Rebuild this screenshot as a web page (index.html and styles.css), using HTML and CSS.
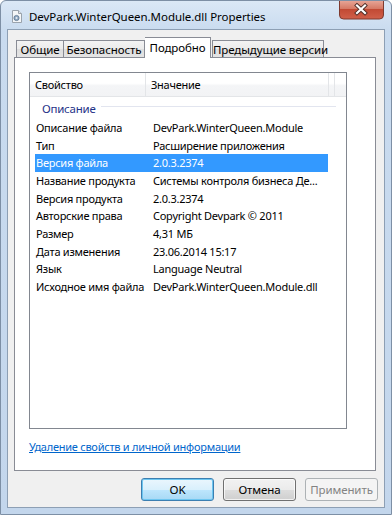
FILE: index.html
```html
<!DOCTYPE html>
<html lang="ru">
<head>
  <meta charset="UTF-8" />
  <title>DevPark.WinterQueen.Module.dll Properties</title>
  <link rel="stylesheet" href="styles.css">
</head>
<body>
  <div class="window">
    <div class="titlebar">
      <svg class="app-icon" width="10" height="13" viewBox="0 0 10 13">
        <path d="M0.5 0.5h6l3 3v9h-9z" fill="#f4f6f8" stroke="#9aa3ad"/>
        <path d="M6.5 0.5v3h3" fill="#dfe3e8" stroke="#9aa3ad"/>
        <circle cx="4.5" cy="8" r="2.6" fill="#8fa7c0" stroke="#5d7690" stroke-width="0.8"/>
        <circle cx="4.5" cy="8" r="1" fill="#e9eef3"/>
      </svg>
      <span class="title">DevPark.WinterQueen.Module.dll Properties</span>
      <button class="close-btn" title="Закрыть">
        <svg width="45" height="20" viewBox="0 0 45 20">
          <defs>
            <linearGradient id="closeGrad" x1="0" y1="0" x2="0" y2="1">
              <stop offset="0" stop-color="#e9a99b"/>
              <stop offset="0.45" stop-color="#d67a66"/>
              <stop offset="0.5" stop-color="#c24a34"/>
              <stop offset="1" stop-color="#d0604a"/>
            </linearGradient>
          </defs>
          <path d="M0.5 0v15a4 4 0 0 0 4 4h36a4 4 0 0 0 4-4v-15" fill="url(#closeGrad)" stroke="#7e3a2f"/>
          <path d="M18 5.5l8 7.5M26 5.5l-8 7.5" stroke="#4a2a25" stroke-width="4" stroke-linecap="square"/>
          <path d="M18 5.5l8 7.5M26 5.5l-8 7.5" stroke="#ffffff" stroke-width="2.2" stroke-linecap="square"/>
        </svg>
      </button>
    </div>

    <div class="client">
      <div class="tabs">
        <div class="tab tab-general">Общие</div>
        <div class="tab tab-security">Безопасность</div>
        <div class="tab tab-details active">Подробно</div>
        <div class="tab tab-previous">Предыдущие версии</div>
      </div>

      <div class="panel">
        <div class="listview">
          <div class="lv-header">
            <div class="col col-name">Свойство</div>
            <div class="col col-value">Значение</div>
            <div class="col col-rest"></div>
          </div>
          <div class="group"><span>Описание</span></div>
          <div class="row"><span class="cell-name">Описание файла</span><span class="cell-value">DevPark.WinterQueen.Module</span></div>
          <div class="row"><span class="cell-name">Тип</span><span class="cell-value">Расширение приложения</span></div>
          <div class="row selected"><span class="cell-name">Версия файла</span><span class="cell-value">2.0.3.2374</span></div>
          <div class="row"><span class="cell-name">Название продукта</span><span class="cell-value">Системы контроля бизнеса Де...</span></div>
          <div class="row"><span class="cell-name">Версия продукта</span><span class="cell-value">2.0.3.2374</span></div>
          <div class="row"><span class="cell-name">Авторские права</span><span class="cell-value">Copyright Devpark © 2011</span></div>
          <div class="row"><span class="cell-name">Размер</span><span class="cell-value">4,31 МБ</span></div>
          <div class="row"><span class="cell-name">Дата изменения</span><span class="cell-value">23.06.2014 15:17</span></div>
          <div class="row"><span class="cell-name">Язык</span><span class="cell-value">Language Neutral</span></div>
          <div class="row"><span class="cell-name">Исходное имя файла</span><span class="cell-value">DevPark.WinterQueen.Module.dll</span></div>
        </div>
        <a class="remove-link" href="#">Удаление свойств и личной информации</a>
      </div>

      <div class="buttons">
        <button class="btn btn-default">OK</button>
        <button class="btn">Отмена</button>
        <button class="btn" disabled>Применить</button>
      </div>
    </div>
  </div>
</body>
</html>
```

FILE: styles.css
```css
body {
  margin: 0;
  font-family: 'Noto Sans', 'Open Sans', sans-serif;
  font-size: 11px;
  letter-spacing: -0.25px;
  color: #000;
  background: #ffffff;
}

.window {
  width: 392px;
  height: 515px;
  box-sizing: border-box;
  border: 1px solid #7d8fa5;
  border-radius: 6px 6px 0 0;
  background: linear-gradient(to bottom, #dbe8f6 0, #c9dbef 30px, #c3d6ec 100%);
  display: flex;
  flex-direction: column;
  overflow: hidden;
}

/* title bar */
.titlebar {
  height: 28px;
  display: flex;
  align-items: center;
  padding-left: 11px;
  flex-shrink: 0;
}

.app-icon {
  margin-top: 3px;
  flex-shrink: 0;
}

.title {
  margin-left: 7px;
  margin-top: 2px;
  font-size: 11.5px;
  letter-spacing: -0.05px;
  color: #000;
  white-space: nowrap;
}

.close-btn {
  margin-left: auto;
  margin-right: 7px;
  align-self: flex-start;
  margin-top: -1px;
  padding: 0;
  border: none;
  background: none;
  width: 45px;
  height: 20px;
  display: block;
}

.close-btn svg {
  display: block;
}

/* client area */
.client {
  margin: 0 6px;
  height: 479px;
  box-sizing: border-box;
  border: 1px solid #8d9fb4;
  background-color: #f0f0f0;
  display: flex;
  flex-direction: column;
}

.tabs {
  display: flex;
  align-items: flex-end;
  height: 20px;
  margin-top: 7px;
  padding-left: 8px;
}

.tab {
  box-sizing: border-box;
  height: 17px;
  padding-top: 2px;
  border: 1px solid #898c95;
  border-bottom: none;
  border-right: none;
  background: linear-gradient(to bottom, #f3f3f3 0, #ebebeb 50%, #dedede 51%, #e4e4e4 100%);
  text-align: center;
  font-size: 11.5px;
  letter-spacing: -0.1px;
  line-height: 14px;
  white-space: nowrap;
}

.tab-general { width: 47px; }
.tab-security { width: 82px; border-right: 1px solid #898c95; }
.tab-details { width: 66px; }
.tab-previous { width: 112px; margin-left: 1px; border-right: 1px solid #898c95; }

.tab.active {
  height: 21px;
  margin-bottom: -1px;
  padding-top: 2px;
  border-right: 1px solid #898c95;
  border-left: none;
  background: #ffffff;
  line-height: 15px;
  position: relative;
  z-index: 1;
}

.panel {
  margin-left: 6px;
  width: 362px;
  height: 414px;
  box-sizing: border-box;
  border: 1px solid #898c95;
  background-color: #ffffff;
  padding: 14px 0 0 14px;
}

/* list view */
.listview {
  width: 318px;
  height: 357px;
  box-sizing: border-box;
  border: 1px solid #828790;
  background: #fff;
}

.lv-header {
  display: flex;
  height: 23px;
  border-bottom: 1px solid #e3e5e8;
  background: linear-gradient(to bottom, #ffffff 0, #ffffff 45%, #f4f5f7 55%, #f2f3f5 100%);
}

.col {
  box-sizing: border-box;
  border-right: 1px solid #e3e5e8;
  padding-left: 5px;
  line-height: 23px;
}

.col-name { width: 116px; }
.col-value { width: 183px; }
.col-rest { width: 3px; }

.group {
  display: flex;
  align-items: center;
  height: 22px;
  padding-left: 12px;
  padding-right: 10px;
  color: #1e3287;
  font-size: 11.5px;
}

.group::after {
  content: "";
  flex: 1;
  height: 1px;
  margin-left: 6px;
  margin-top: -3px;
  background-color: #e2e5ef;
}

.row {
  display: flex;
  height: 17.67px;
  line-height: 17px;
  margin-left: 5px;
  width: 293px;
  white-space: nowrap;
}

.row.selected {
  background-color: #3399ff;
  color: #fff;
}

.cell-name {
  width: 116px;
  padding-left: 1px;
}

.cell-value {
  padding-left: 1px;
}

.remove-link {
  display: inline-block;
  margin-top: 10px;
  color: #0066cc;
  text-decoration: underline;
}

/* dialog buttons */
.buttons {
  display: flex;
  justify-content: flex-end;
  gap: 9px;
  margin-top: 7px;
  padding-right: 6px;
}

.btn {
  width: 73px;
  height: 23px;
  padding: 0;
  font-family: inherit;
  font-size: 11.5px;
  letter-spacing: -0.1px;
  color: #000;
  border: 1px solid #707070;
  border-radius: 3px;
  background: linear-gradient(to bottom, #f2f2f2 0, #ebebeb 50%, #dddddd 51%, #cfcfcf 100%);
  box-shadow: inset 0 0 0 1px rgba(255, 255, 255, 0.7);
}

.btn-default {
  border-color: #3c7fb1;
  background: linear-gradient(to bottom, #eaf6fd 0, #d9f0fc 50%, #bee6fd 51%, #a7d9f5 100%);
  box-shadow: inset 0 0 0 1px #6ec6f0;
}

.btn:disabled {
  border-color: #adb2b5;
  background: #f4f4f4;
  color: #838383;
  box-shadow: none;
}
```
